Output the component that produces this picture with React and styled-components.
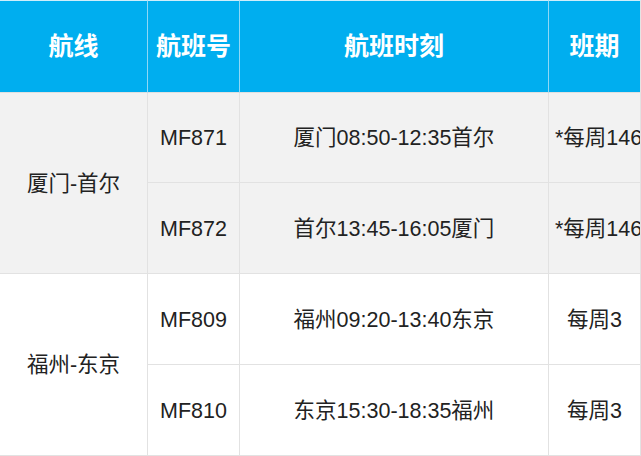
import { Fragment } from "react";
import styled, { createGlobalStyle } from "styled-components";

const GlobalStyle = createGlobalStyle`
  html, body {
    margin: 0;
    padding: 0;
    background: #ffffff;
  }
  body {
    font-family: "Liberation Sans", "Noto Sans CJK SC", sans-serif;
  }
`;

const Table = styled.div`
  display: grid;
  grid-template-columns: 148px 92px 309px 92px;
  grid-template-rows: 93px 90px 91px 91px 91px;
  width: 641px;
  height: 456px;
  box-sizing: border-box;
`;

const HeadCell = styled.div`
  display: flex;
  align-items: center;
  justify-content: center;
  box-sizing: border-box;
  background: #00aeef;
  color: #ffffff;
  font-size: 25px;
  font-weight: 700;
  line-height: 1;
  border-top: 1px solid #cfeefb;
  border-right: 1px solid ${({ $last }) => ($last ? "#e4e4e4" : "#8fd8f6")};
  border-bottom: 1px solid #e0e0e0;
`;

const Cell = styled.div`
  display: flex;
  align-items: center;
  justify-content: ${({ $left }) => ($left ? "flex-start" : "center")};
  box-sizing: border-box;
  padding: 3px 6px 0;
  overflow: hidden;
  white-space: nowrap;
  background: ${({ $shade }) => ($shade ? "#f2f2f2" : "#ffffff")};
  color: #222222;
  font-size: 21.5px;
  line-height: 1;
  border-right: 1px solid #e2e2e2;
  border-bottom: 1px solid #e2e2e2;
  grid-row: ${({ $span }) => ($span ? `span ${$span}` : "auto")};
`;

const routes = [
  {
    name: "厦门-首尔",
    shade: true,
    flights: [
      { no: "MF871", time: "厦门08:50-12:35首尔", days: "*每周146" },
      { no: "MF872", time: "首尔13:45-16:05厦门", days: "*每周146" },
    ],
  },
  {
    name: "福州-东京",
    shade: false,
    flights: [
      { no: "MF809", time: "福州09:20-13:40东京", days: "每周3" },
      { no: "MF810", time: "东京15:30-18:35福州", days: "每周3" },
    ],
  },
];

export default function App() {
  return (
    <>
      <GlobalStyle />
      <Table>
        <HeadCell>航线</HeadCell>
        <HeadCell>航班号</HeadCell>
        <HeadCell>航班时刻</HeadCell>
        <HeadCell $last>班期</HeadCell>
        {routes.map((r) =>
          r.flights.map((f, i) => (
            <Fragment key={f.no}>
              {i === 0 && (
                <Cell $shade={r.shade} $span={r.flights.length}>
                  {r.name}
                </Cell>
              )}
              <Cell $shade={r.shade}>{f.no}</Cell>
              <Cell $shade={r.shade}>{f.time}</Cell>
              <Cell $shade={r.shade} $left={f.days.length > 4}>
                {f.days}
              </Cell>
            </Fragment>
          ))
        )}
      </Table>
    </>
  );
}
